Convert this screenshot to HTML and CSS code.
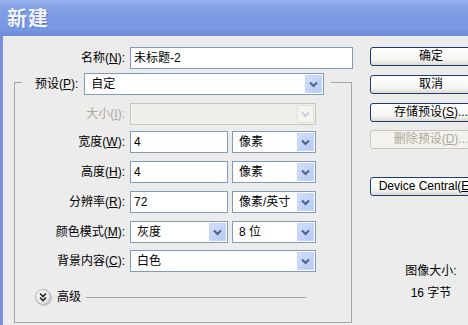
FILE: index.html
```html
<!DOCTYPE html>
<html lang="zh-CN">
<head>
  <meta charset="utf-8">
  <title>新建</title>
  <link rel="stylesheet" href="styles.css">
</head>
<body>
  <div class="dialog">
    <div class="titlebar">新建</div>

    <div class="window">
      <div class="main">
        <div class="name-row">
          <span class="lbl">名称(<u>N</u>):</span>
          <div class="field">未标题-2</div>
        </div>

        <fieldset class="group">
          <legend class="preset">
            <span class="lbl">预设(<u>P</u>):</span>
            <div class="field combo w240">
              <span class="val">自定</span>
              <span class="drop"><svg width="17" height="18" viewBox="0 0 17 18"><path d="M5 7.5 L8.5 11 L12 7.5" fill="none" stroke="#4d6185" stroke-width="2"/></svg></span>
            </div>
          </legend>

          <div class="row r-size">
            <span class="lbl off">大小(<u>I</u>):</span>
            <div class="field combo w186 disabled">
              <span class="val"></span>
              <span class="drop"><svg width="17" height="18" viewBox="0 0 17 18"><path d="M5 7.5 L8.5 11 L12 7.5" fill="none" stroke="#c9ccd6" stroke-width="2"/></svg></span>
            </div>
          </div>

          <div class="row r-width">
            <span class="lbl">宽度(<u>W</u>):</span>
            <div class="pair">
              <div class="field w98">4</div>
              <div class="field combo w84">
                <span class="val">像素</span>
                <span class="drop"><svg width="17" height="18" viewBox="0 0 17 18"><path d="M5 7.5 L8.5 11 L12 7.5" fill="none" stroke="#4d6185" stroke-width="2"/></svg></span>
              </div>
            </div>
          </div>

          <div class="row r-next">
            <span class="lbl">高度(<u>H</u>):</span>
            <div class="pair">
              <div class="field w98">4</div>
              <div class="field combo w84">
                <span class="val">像素</span>
                <span class="drop"><svg width="17" height="18" viewBox="0 0 17 18"><path d="M5 7.5 L8.5 11 L12 7.5" fill="none" stroke="#4d6185" stroke-width="2"/></svg></span>
              </div>
            </div>
          </div>

          <div class="row r-next">
            <span class="lbl">分辨率(<u>R</u>):</span>
            <div class="pair">
              <div class="field w98">72</div>
              <div class="field combo w84">
                <span class="val">像素/英寸</span>
                <span class="drop"><svg width="17" height="18" viewBox="0 0 17 18"><path d="M5 7.5 L8.5 11 L12 7.5" fill="none" stroke="#4d6185" stroke-width="2"/></svg></span>
              </div>
            </div>
          </div>

          <div class="row r-next">
            <span class="lbl">颜色模式(<u>M</u>):</span>
            <div class="pair">
              <div class="field combo w98">
                <span class="val">灰度</span>
                <span class="drop"><svg width="17" height="18" viewBox="0 0 17 18"><path d="M5 7.5 L8.5 11 L12 7.5" fill="none" stroke="#4d6185" stroke-width="2"/></svg></span>
              </div>
              <div class="field combo w84">
                <span class="val">8 位</span>
                <span class="drop"><svg width="17" height="18" viewBox="0 0 17 18"><path d="M5 7.5 L8.5 11 L12 7.5" fill="none" stroke="#4d6185" stroke-width="2"/></svg></span>
              </div>
            </div>
          </div>

          <div class="row r-bg">
            <span class="lbl">背景内容(<u>C</u>):</span>
            <div class="field combo w186">
              <span class="val">白色</span>
              <span class="drop"><svg width="17" height="18" viewBox="0 0 17 18"><path d="M5 7.5 L8.5 11 L12 7.5" fill="none" stroke="#4d6185" stroke-width="2"/></svg></span>
            </div>
          </div>

          <div class="advanced">
            <span class="adv-icon"><svg width="16" height="16" viewBox="0 0 16 16"><path d="M5 4.5 L8 7.5 L11 4.5 M5 8.5 L8 11.5 L11 8.5" fill="none" stroke="#222" stroke-width="1.6"/></svg></span>
            <span class="adv-text">高级</span>
            <span class="adv-line"></span>
          </div>
        </fieldset>
      </div>

      <div class="side">
        <div class="btn">确定</div>
        <div class="btn b-next">取消</div>
        <div class="btn b-next">存储预设(<u>S</u>)...</div>
        <div class="btn b-del disabled">删除预设(<u>D</u>)...</div>
        <div class="btn b-dc">Device Central(<u>E</u>)...</div>

        <div class="info">
          <div>图像大小:</div>
          <div>16 字节</div>
        </div>
      </div>
    </div>
  </div>
</body>
</html>
```

FILE: styles.css
```css
html, body {
  margin: 0;
  padding: 0;
  overflow: hidden;
}

body {
  background-color: #ececec;
  font-family: "Liberation Sans", "Noto Sans CJK SC", sans-serif;
  font-size: 12px;
  color: #000;
}

.dialog {
  width: 500px;
}

/* 标题栏 */
.titlebar {
  height: 36px;
  line-height: 36px;
  padding-left: 7px;
  background: linear-gradient(#98b1ec, #7f9de4 30%, #7898e2 80%, #6d8bd9);
  color: #f2f5ff;
  font-family: "Noto Sans CJK SC", sans-serif;
  font-size: 20px;
  font-weight: bold;
  letter-spacing: 1px;
  text-shadow: 1px 1px 0 #5f7ccc;
}

.window {
  display: flex;
  height: 289px;
  border-left: 3px solid #7b8de0;
}

.main {
  width: 350px;
  padding-top: 11px;
}

.name-row {
  display: grid;
  grid-template-columns: 122px 223px;
  column-gap: 5px;
  height: 22px;
}

.lbl {
  line-height: 22px;
  text-align: right;
  white-space: nowrap;
}

.lbl.off {
  color: #aca899;
}

/* 输入框 / 下拉框 */
.field {
  box-sizing: border-box;
  height: 22px;
  line-height: 20px;
  padding: 0 3px;
  background: #fff;
  border: 1px solid #7f9db9;
  white-space: nowrap;
  overflow: hidden;
}

.combo {
  display: flex;
  padding: 1px 1px 1px 0;
}

.combo .val {
  flex: 1;
  line-height: 18px;
  padding-left: 6px;
  overflow: hidden;
}

.combo .drop {
  width: 17px;
  height: 18px;
  border-radius: 1px;
  background: linear-gradient(135deg, #d4e0fb, #b5c8f5);
  box-shadow: inset 0 0 0 1px #c6d5fb;
}

.combo .drop svg {
  display: block;
}

.combo.disabled {
  background: #f0efea;
  border-color: #c9c7ba;
}

.combo.disabled .drop {
  background: #f5f4ef;
  box-shadow: inset 0 0 0 1px #e2e1dc;
}

.w240 { width: 240px; }
.w186 { width: 186px; }
.w98 { width: 98px; }
.w84 { width: 84px; }

/* 预设分组框 */
.group {
  margin: 0 0 0 11px;
  padding: 0 0 17px;
  width: 336px;
  min-width: 0;
  border: 1px solid #a5a5a5;
}

.preset {
  display: flex;
  margin-left: 7px;
  padding: 4px 7px 0 13px;
}

.preset .field {
  margin-left: 6px;
}

.row {
  display: grid;
  grid-template-columns: 110px auto;
  column-gap: 5px;
  height: 22px;
  margin-top: 8px;
}

.r-width { margin-top: 6px; }
.r-bg { margin-top: 7px; }

.pair {
  display: flex;
  gap: 4px;
}

/* 高级 */
.advanced {
  display: flex;
  align-items: center;
  height: 16px;
  margin-top: 17px;
  padding-left: 20px;
}

.adv-icon {
  box-sizing: border-box;
  width: 16px;
  height: 16px;
  border-radius: 50%;
  border: 1px solid #b4b4b4;
  background: radial-gradient(circle at 40% 35%, #fff, #e6e6e6 60%, #cfcfcf);
  box-shadow: 1px 1px 1px rgba(0,0,0,0.15);
}

.adv-icon svg {
  display: block;
  margin: -1px;
}

.adv-text {
  margin-left: 6px;
  line-height: 16px;
}

.adv-line {
  width: 220px;
  height: 1px;
  margin-left: 5px;
  background: #a5a5a5;
}

/* 右侧按钮 */
.side {
  width: 122px;
  margin-left: 17px;
  padding-top: 11px;
}

.btn {
  box-sizing: border-box;
  height: 19px;
  line-height: 17px;
  text-align: center;
  white-space: nowrap;
  border: 1px solid #1d3d72;
  border-radius: 3px;
  background: linear-gradient(#ffffff, #f5f5f1 70%, #dcd9d0);
}

.b-next { margin-top: 9px; }
.b-del { margin-top: 8px; }
.b-dc { margin-top: 28px; }

.btn.disabled {
  color: #aca899;
  border-color: #c9c7ba;
  background: #f3f2ee;
}

.info {
  margin-top: 64px;
  line-height: 22px;
  text-align: center;
}
```
